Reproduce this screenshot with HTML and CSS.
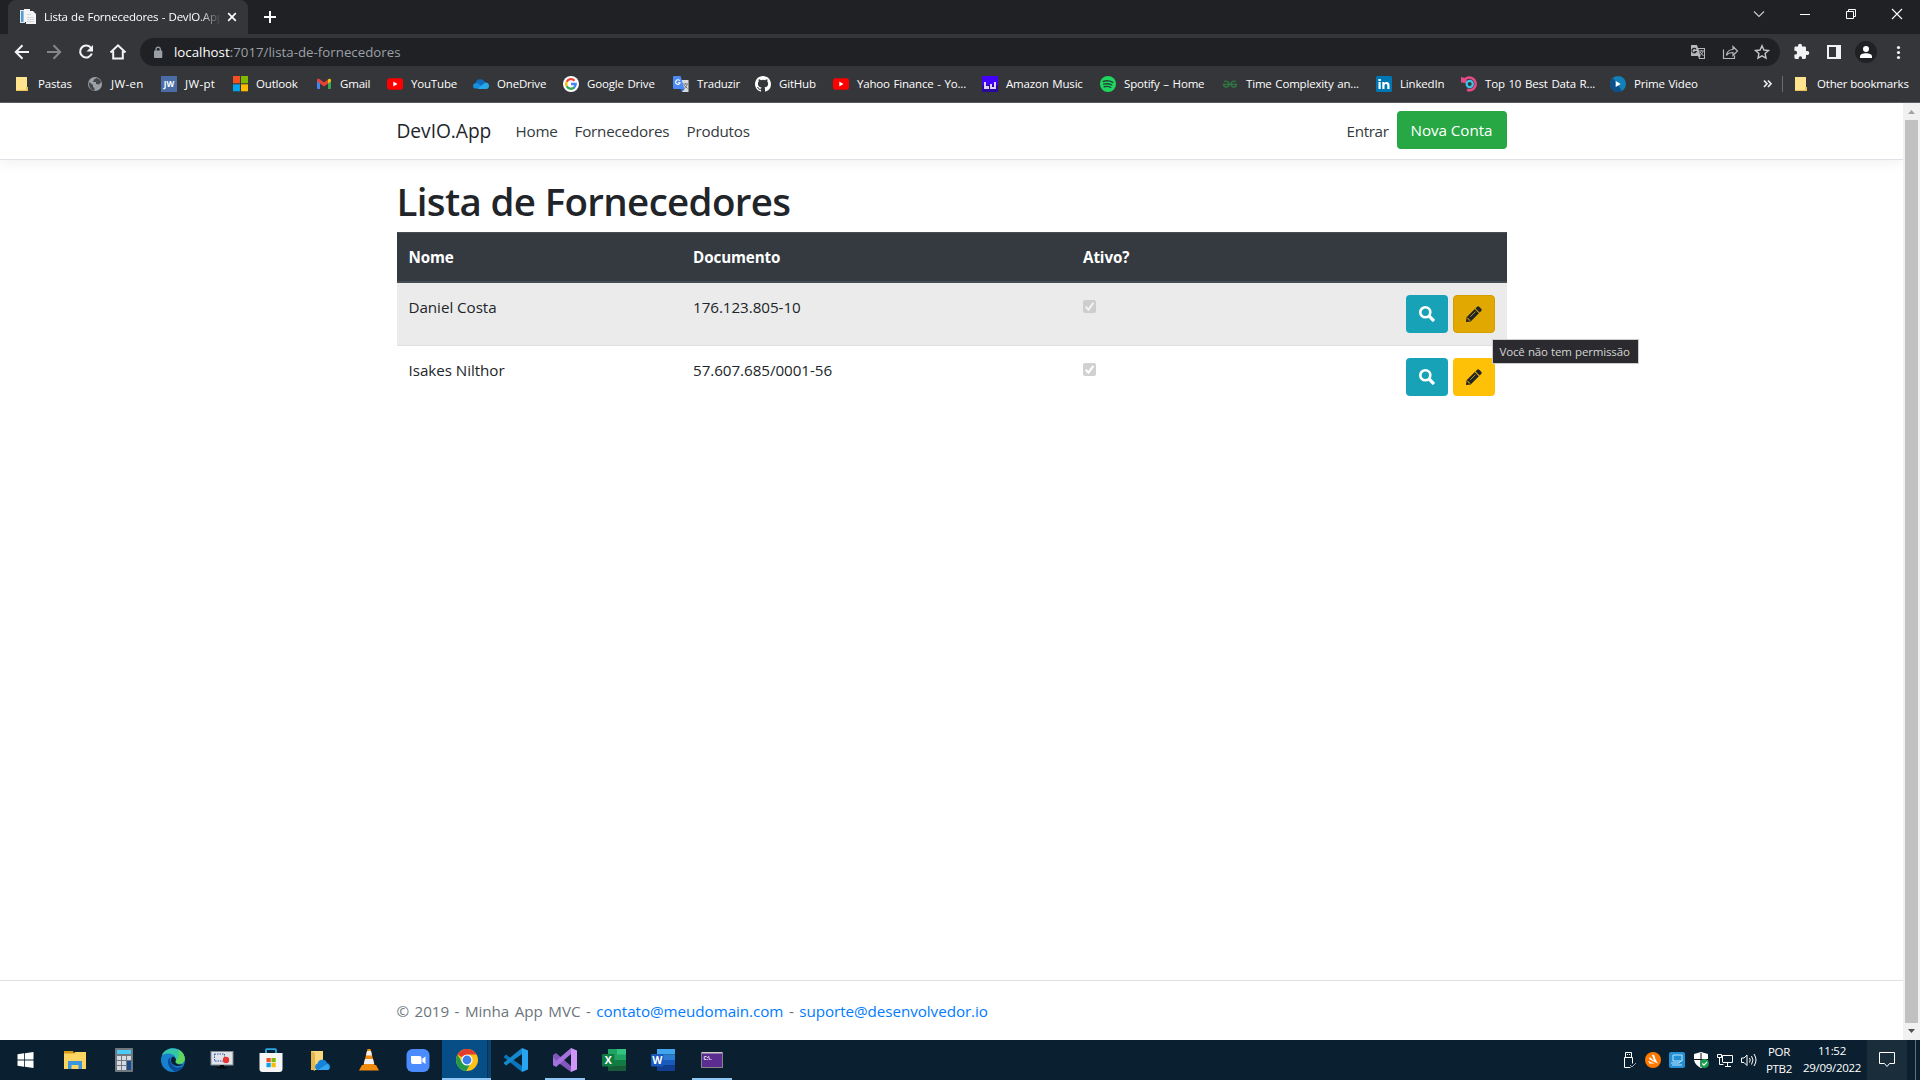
FILE: index.html
```html
<!DOCTYPE html>
<html lang="pt-br">
<head>
<meta charset="utf-8">
<title>Lista de Fornecedores - DevIO.App</title>
<link rel="stylesheet" href="styles.css">
</head>
<body>
<svg class="defs" width="0" height="0">
  <symbol id="folder" viewBox="0 0 16 16"><path fill="#ffe38f" d="M2 1h11v10h1v4H2z"/><path fill="#e9c558" d="M2 14h12v1H2zM12 11h2v4h-2z"/></symbol>
  <symbol id="youtube" viewBox="0 0 16 16"><rect y="2.3" width="16" height="11.4" rx="2.6" fill="#f00"/><path fill="#fff" d="M6.3 5.6v4.8L10.5 8z"/></symbol>
  <symbol id="search" viewBox="0 0 16 16"><circle cx="6.3" cy="6.3" r="5" fill="none" stroke="#fff" stroke-width="2.6"/><path d="M10 10l5 5" stroke="#fff" stroke-width="3.2"/></symbol>
  <symbol id="pencil" viewBox="0 0 16 16"><path fill="#212529" d="M11.1.8a1.5 1.5 0 0 1 2.1 0l2 2a1.5 1.5 0 0 1 0 2.1l-1.6 1.6-4.1-4.1zM8.8 3.1l4.1 4.1-8.2 8.2L.5 16a.5.5 0 0 1-.5-.5l.6-4.2z"/><path d="M4.3 10.8l5.2-5.2M1.2 12.2l1.2.3v1.3h1.3l.3 1" stroke="#dba40a" fill="none" stroke-width=".9"/></symbol>
</svg>

<header class="browser">
  <div class="tabstrip">
    <div class="tab">
      <svg width="16" height="16" viewBox="0 0 16 16"><path fill="#dfe6ec" d="M0 1h5v13H0z"/><path fill="#4f9fd0" d="M1 2h2.500v11H1z"/><path fill="#f4f4f4" d="M4 0h6v2h3l3 3v10H6v-2H4z"/><path fill="#d3d7da" d="M7 5h4v1H7zM7 8h7v1H7zM7 10h7v1H7zM7 12h7v1H7z"/></svg>
      <span class="tab-title">Lista de Fornecedores - DevIO.App</span>
      <svg class="tab-close" width="16" height="16" viewBox="0 0 16 16"><path d="M4.2 4.2l7.6 7.6M11.8 4.2l-7.6 7.6" stroke="#fff" stroke-width="1.7"/></svg>
    </div>
    <svg class="newtab" width="14" height="14" viewBox="0 0 14 14"><path d="M7 1v12M1 7h12" stroke="#fff" stroke-width="2"/></svg>
    <div class="winctl">
      <svg viewBox="0 0 46 28"><path d="M18 11.5l5 5 5-5" fill="none" stroke="#ccc" stroke-width="1.1"/></svg>
      <svg viewBox="0 0 46 28"><path d="M18 14.5h10" stroke="#fff"/></svg>
      <svg viewBox="0 0 46 28"><path d="M18.500 11.500h7v7h-7zM20.500 11.500v-2h7v7h-2" fill="none" stroke="#fff"/></svg>
      <svg viewBox="0 0 46 28"><path d="M18 9l10 10M28 9L18 19" stroke="#fff" stroke-width="1.1"/></svg>
    </div>
  </div>
  <div class="toolbar">
    <div class="navicons">
      <svg viewBox="0 0 32 32"><path d="M23 16H10M16.500 9.300L9.800 16l6.700 6.700" fill="none" stroke="#f1f3f4" stroke-width="2"/></svg>
      <svg viewBox="0 0 32 32"><path d="M9 16h13M15.500 9.300l6.700 6.700-6.700 6.700" fill="none" stroke="#84868a" stroke-width="2"/></svg>
      <svg viewBox="0 0 32 32"><path d="M21 12a6 6 0 1 0 .8 5.500" fill="none" stroke="#f1f3f4" stroke-width="2.100"/><path d="M23 9v6.500h-6.500z" fill="#f1f3f4"/></svg>
      <svg viewBox="0 0 32 32"><path d="M8.500 16.500L16 9.300l7.500 7.200M11.200 15v7.500h9.600V15" fill="none" stroke="#f1f3f4" stroke-width="2"/></svg>
    </div>
    <div class="omnibox">
      <svg class="lock" width="10" height="13" viewBox="0 0 10 13"><rect x="1" y="4.500" width="8.300" height="7.500" rx="1" fill="#9aa0a6"/><path d="M3 5V3.200a2.150 2.150 0 0 1 4.300 0V5" fill="none" stroke="#9aa0a6" stroke-width="1.300"/></svg>
      <span class="url"><b>localhost</b>:7017/lista-de-fornecedores</span>
      <div class="omni-icons">
        <svg viewBox="0 0 32 32"><path fill="#b5b7ba" d="M9 9h6l1 3h7v11h-6l-1-3H9z"/><path fill="#202124" d="M16.500 13H22v9h-4.500l1-2z"/><path d="M14 13.300a2.200 2.200 0 1 0 .2 2.200H12.500" fill="none" stroke="#202124" stroke-width="1.200"/><path d="M17 15h5M19.500 14v1M21 15.500c-.5 2-2 3-3.500 4M18 16l3.500 4" fill="none" stroke="#b5b7ba"/></svg>
        <svg viewBox="0 0 32 32"><path d="M9.500 13.500v9h11v-3" fill="none" stroke="#b5b7ba" stroke-width="1.200"/><path d="M12.500 19.500c.5-4 3-6 6.500-6v-3l4.500 4.500-4.500 4.500v-3c-3 0-5 .8-6.500 3z" fill="none" stroke="#b5b7ba" stroke-width="1.200"/></svg>
        <svg viewBox="0 0 32 32"><path d="M16 9.800l1.900 4.200 4.600.5-3.400 3.100.9 4.600-4-2.400-4 2.400.9-4.600-3.400-3.100 4.600-.5z" fill="none" stroke="#c4c6c9" stroke-width="1.400"/></svg>
      </div>
    </div>
    <div class="exticons">
      <svg viewBox="0 0 32 32"><path fill="#f1f3f4" d="M21.300 15H20v-3.200c0-.7-.6-1.300-1.300-1.300H16V9.800a2 2 0 0 0-4 0v.7H9.700c-.7 0-1.300.6-1.300 1.300v3h.8a1.900 1.900 0 0 1 0 3.800h-.8v3c0 .7.600 1.400 1.300 1.400h3v-1a1.700 1.700 0 0 1 3.400 0v1h2.600c.7 0 1.300-.7 1.300-1.400V19h1.300a2 2 0 0 0 0-4z"/></svg>
      <svg viewBox="0 0 32 32"><path fill="#f1f3f4" fill-rule="evenodd" d="M9 9h14v14H9zM11 11v10h7V11z"/></svg>
      <svg viewBox="0 0 32 32"><circle cx="16" cy="16" r="11" fill="#202124"/><circle cx="16" cy="13" r="3" fill="#fff"/><path d="M10 22v-1.500c0-2 3-3.200 6-3.200s6 1.200 6 3.200V22z" fill="#fff"/></svg>
      <svg viewBox="0 0 32 32"><g fill="#f1f3f4"><circle cx="16.500" cy="11.500" r="1.600"/><circle cx="16.500" cy="16.500" r="1.600"/><circle cx="16.500" cy="21.500" r="1.600"/></g></svg>
    </div>
  </div>
  <nav class="bookmarks">
    <div class="bm"><svg><use href="#folder"/></svg><span>Pastas</span></div>
    <div class="bm wide"><svg viewBox="0 0 16 16"><circle cx="8" cy="8" r="7" fill="#9aa0a6"/><path d="M2 6l4 3v2l1.500 1v2.800C4 14.500 1.500 11 2 6zM7 3.500L9.500 2c2.500.5 4 2 4.700 4L12 8.500 9 8V6H6z" fill="#45474b"/></svg><span>JW-en</span></div>
    <div class="bm wide"><svg viewBox="0 0 16 16"><rect width="16" height="16" fill="#4a6da7"/><text x="8" y="11" class="logo jw">JW</text></svg><span>JW-pt</span></div>
    <div class="bm"><svg viewBox="0 0 16 16"><path fill="#f25022" d="M1 0h7v7.300H1z"/><path fill="#7fba00" d="M9 0h7v7.300H9z"/><path fill="#00a4ef" d="M1 8.300h7v7H1z"/><path fill="#ffb900" d="M9 8.300h7v7H9z"/></svg><span>Outlook</span></div>
    <div class="bm"><svg viewBox="0 0 16 16"><path fill="#4285f4" d="M1 4l3 2.500V13H2a1 1 0 0 1-1-1z"/><path fill="#34a853" d="M12 6.500L15 4v8a1 1 0 0 1-1 1h-2z"/><path fill="#ea4335" d="M1 4.500V4a1.500 1.500 0 0 1 2.400-1L8 6.500 12 3.500v4L8 10.500 1 5z"/><path fill="#fbbc04" d="M12 3.500l.6-.5A1.500 1.500 0 0 1 15 4v1.200l-3 2.300z"/></svg><span>Gmail</span></div>
    <div class="bm"><svg><use href="#youtube"/></svg><span>YouTube</span></div>
    <div class="bm"><svg viewBox="0 0 16 16"><path fill="#0f6cbd" d="M2.500 8A5 5 0 0 1 12 6l-4 6H3z"/><path fill="#1490df" d="M0 10.300A3.300 3.300 0 0 1 5 7.400l7 5.100H3A2.500 2.500 0 0 1 0 10.300z"/><path fill="#28a8ea" d="M4.500 12.900L12 6.500a3.300 3.300 0 0 1 4 3.600 2.900 2.900 0 0 1-3 2.800z"/></svg><span>OneDrive</span></div>
    <div class="bm"><svg viewBox="0 0 16 16"><circle cx="8" cy="8" r="8" fill="#fff"/><g fill="none" stroke-width="2.300"><path stroke="#ea4335" d="M3.800 5.800A4.700 4.700 0 0 1 11.500 4.700"/><path stroke="#fbbc05" d="M3.800 5.600a4.700 4.700 0 0 0 0 4.800"/><path stroke="#34a853" d="M3.800 10.200a4.700 4.700 0 0 0 7.500 1.200"/><path stroke="#4285f4" d="M8 8h4.700a4.700 4.700 0 0 1-1.600 3.600"/></g></svg><span>Google Drive</span></div>
    <div class="bm"><svg viewBox="0 0 16 16"><path fill="#d8dadd" d="M7 4h8.500v12H9z"/><path fill="#4c8bf5" d="M1 0h6.500l4 13H1a1 1 0 0 1-1-1V1a1 1 0 0 1 1-1z"/><path fill="#3367d6" d="M8 13h3.500L9 16z"/><path d="M6.800 4.800a2.300 2.300 0 1 0 .3 2H5" fill="none" stroke="#fff" stroke-width="1.100"/><path d="M10 8h5M12.500 7v1M14 8.500c-.5 2-1.500 3-3 4M11 9l3.500 3.500" stroke="#777" fill="none"/></svg><span>Traduzir</span></div>
    <div class="bm"><svg viewBox="0 0 16 16"><path fill="#fff" d="M8 0C3.580 0 0 3.580 0 8c0 3.540 2.290 6.530 5.470 7.590.4.070.55-.17.55-.38 0-.19-.01-.82-.01-1.490-2.010.37-2.530-.49-2.690-.94-.09-.23-.48-.94-.82-1.130-.28-.15-.68-.52-.01-.53.63-.01 1.080.58 1.230.82.72 1.210 1.870.87 2.330.66.07-.52.28-.87.51-1.070-1.780-.2-3.640-.89-3.640-3.950 0-.87.31-1.590.82-2.150-.08-.2-.36-1.020.08-2.120 0 0 .67-.21 2.200.82a7.600 7.600 0 0 1 4 0c1.530-1.040 2.200-.82 2.200-.82.44 1.100.16 1.920.08 2.120.51.56.82 1.270.82 2.150 0 3.070-1.870 3.750-3.650 3.950.29.25.54.73.54 1.480 0 1.070-.01 1.930-.01 2.200 0 .21.15.46.55.38A8.010 8.010 0 0 0 16 8c0-4.420-3.580-8-8-8z"/></svg><span>GitHub</span></div>
    <div class="bm"><svg><use href="#youtube"/></svg><span>Yahoo Finance - Yo...</span></div>
    <div class="bm"><svg viewBox="0 0 16 16"><rect width="16" height="16" fill="#4200ff"/><path fill="#2b079c" d="M0 9h16v7H0z"/><path fill="#dcd2f5" d="M2 6h2v7H2zM4 10h3v3H4zM8 8h2v5H8zM8 11h4v2H8zM12 6h2v7h-2z"/></svg><span>Amazon Music</span></div>
    <div class="bm"><svg viewBox="0 0 16 16"><circle cx="8" cy="8" r="8" fill="#1ed760"/><path d="M3.300 5.500c3-1 6.800-.7 9.500.8M3.800 8.200c2.600-.8 5.500-.5 8 .8M4.200 10.700c2.200-.6 4.500-.4 6.600.8" fill="none" stroke="#26433a" stroke-width="1.400" stroke-linecap="round"/></svg><span>Spotify – Home</span></div>
    <div class="bm"><svg viewBox="0 0 16 16"><path d="M2 5.500c3-1 5 .5 5 2.500S5.500 11 4 11 1.500 10 1.500 8.300h13C14.500 10 13.500 11 12 11S9 10 9 8s2-3.500 5-2.500" fill="none" stroke="#2c7a42" stroke-width="1.300"/></svg><span>Time Complexity an...</span></div>
    <div class="bm"><svg viewBox="0 0 16 16"><rect width="16" height="16" rx="1.500" fill="#0077b5"/><path fill="#fff" d="M2.500 6h2.200v7H2.500zM2.400 3h2.400v2H2.400zM6.300 6h2.200v1c1-1.600 5-1.800 5 2v4h-2.200V9.500c0-2.300-2.800-2-2.800 0V13H6.300z"/></svg><span>LinkedIn</span></div>
    <div class="bm"><svg viewBox="0 0 16 16"><path d="M3 4.500A6.300 6.300 0 1 1 6 13.800" fill="none" stroke="#e64a87" stroke-width="2.600"/><path fill="#e64a87" d="M0 1l6 1.500L5 7l-5-.5z"/><circle cx="8.700" cy="8" r="3.100" fill="none" stroke="#3cc4e8" stroke-width="2.200"/></svg><span>Top 10 Best Data R...</span></div>
    <div class="bm"><svg viewBox="0 0 16 16"><circle cx="8" cy="8" r="8" fill="#127fb7"/><path fill="#0d4f87" d="M0 8a8 8 0 0 0 12 7L3 2A8 8 0 0 0 0 8z"/><path fill="#fff" d="M5.700 5v6l5-3z"/></svg><span>Prime Video</span></div>
    <svg class="more" viewBox="0 0 10 10"><path d="M1 1.500L4 4.800 1 8M5 1.500l3 3.300L5 8" fill="none" stroke="#e8eaed" stroke-width="1.700"/></svg>
    <div class="bm other"><svg><use href="#folder"/></svg><span>Other bookmarks</span></div>
  </nav>
</header>

<div class="viewport">
  <div class="page">
    <header class="navbar">
      <div class="container">
        <a class="brand">DevIO.App</a>
        <a class="link home">Home</a><a class="link forn">Fornecedores</a><a class="link">Produtos</a>
        <a class="link entrar">Entrar</a><a class="btn success">Nova Conta</a>
      </div>
    </header>
    <main class="container-main">
      <h1>Lista de Fornecedores</h1>
      <table>
        <thead><tr><th class="c1">Nome</th><th class="c2">Documento</th><th class="c3">Ativo?</th><th></th></tr></thead>
        <tbody>
          <tr class="odd"><td>Daniel Costa</td><td>176.123.805-10</td>
            <td><svg class="check" viewBox="0 0 13 13"><rect width="13" height="13" rx="2" fill="#cdcdcd"/><path d="M2.700 6.800l2.700 2.800 5-6.800" fill="none" stroke="#f3f3f3" stroke-width="2"/></svg></td>
            <td><div class="actions"><a class="btn info"><svg><use href="#search"/></svg></a><a class="btn warning hover"><svg><use href="#pencil"/></svg><span class="tooltip">Você não tem permissão</span></a></div></td></tr>
          <tr><td>Isakes Nilthor</td><td>57.607.685/0001-56</td>
            <td><svg class="check" viewBox="0 0 13 13"><rect width="13" height="13" rx="2" fill="#d1d1d1"/><path d="M2.700 6.800l2.700 2.800 5-6.800" fill="none" stroke="#fff" stroke-width="2"/></svg></td>
            <td><div class="actions"><a class="btn info"><svg><use href="#search"/></svg></a><a class="btn warning"><svg><use href="#pencil"/></svg></a></div></td></tr>
        </tbody>
      </table>
    </main>
    <footer class="footer"><p>© 2019 - Minha App MVC - <a>contato@meudomain.com</a> - <a>suporte@desenvolvedor.io</a></p></footer>
  </div>
  <div class="scrollbar">
    <svg viewBox="0 0 17 17"><path d="M5 11h7L8.500 7z" fill="#a3a3a3"/></svg>
    <div class="thumb"></div>
    <svg viewBox="0 0 17 17"><path d="M5 6h7l-3.500 4z" fill="#505050"/></svg>
  </div>
</div>

<footer class="taskbar">
  <div class="apps">
    <div class="app"><svg viewBox="0 0 24 24"><path fill="#fff" d="M3.500 6.200l6.500-.9v6.300H3.500zM10.800 5.200L19.500 4v7.600h-8.700zM3.500 12.400H10v6.300l-6.500-.9zM10.800 12.400h8.700V20l-8.700-1.200z"/></svg></div>
    <div class="app"><svg viewBox="0 0 24 24"><path fill="#d69b10" d="M1 3h9l1 2v3H1z"/><path fill="#fcd462" d="M1 5.500h10L12 4h11v17H1z"/><path fill="#3a96dd" d="M5 13h14v8h-3.500v-4h-7v4H5z"/></svg></div>
    <div class="app"><svg viewBox="0 0 24 24"><rect x="3" width="18" height="24" rx="1" fill="#707980"/><path fill="#4cc9f5" d="M5 2h14v4H5z"/><g fill="#d5dbe0"><path d="M5 8h4v4H5zM10 8h4v4h-4zM15 8h4v4h-4zM5 13h4v4H5zM10 13h4v4h-4zM5 18h4v4H5zM10 18h4v4h-4z"/></g><path fill="#174a8f" d="M15 13h4v9h-4z"/></svg></div>
    <div class="app"><svg viewBox="0 0 24 24"><circle cx="12" cy="12" r="12" fill="#1781cf"/><path fill="#35c6a5" d="M1 7C5-2 20-2 23.500 9c1 4-1.500 7-5 7-4 0-5-2-3.500-4C15 5 6 4 1 7z"/><path fill="#62d65a" d="M17 1.200c6 3 8 9 6 12.300-2 3-8 3-8.500 0C18 10 19 5 17 1.200z"/><path fill="#0b4c99" d="M9 9c-4 4-2 11 5 14.800 4-.5 7-3 8-5.300-6 3-13 0-13-9.500z"/><path fill="#0a1f30" d="M11 9c-2 3-1 7 3 8.500 3 1 6 .5 8.300-1C18 17 14 16 14.500 13 16 11 13 8 11 9z"/></svg></div>
    <div class="app"><svg viewBox="0 0 24 24"><rect x="1" y="3.500" width="22" height="13.500" fill="#dfe3e8" stroke="#808890"/><path d="M10 17h4v2h3v1.500H7V19h3z" fill="#05080b"/><rect x="4.500" y="6" width="10" height="7" fill="none" stroke="#3359b5" stroke-dasharray="1.500 1"/><circle cx="16" cy="12" r="3.200" fill="#e83434"/></svg></div>
    <div class="app"><svg viewBox="0 0 24 24"><path d="M7 6V2q0-.8.800-.8h8.400q.8 0 .8.800v4" fill="none" stroke="#29a8e8" stroke-width="1.800"/><path fill="#f5f5f5" d="M.5 5h23v16a3 3 0 0 1-3 3h-17a3 3 0 0 1-3-3z"/><path fill="#f25022" d="M7.500 10h4.200v4.200H7.500z"/><path fill="#7fba00" d="M12.500 10h4.200v4.200h-4.200z"/><path fill="#00a4ef" d="M7.500 15h4.200v4.200H7.500z"/><path fill="#ffb900" d="M12.500 15h4.200v4.200h-4.200z"/></svg></div>
    <div class="app"><svg viewBox="0 0 24 24"><path fill="#f9d77e" d="M3 3h12v19H3z"/><path fill="#e4b64d" d="M3 3l4 2v18l-4-2z"/><path fill="#1683d8" d="M9 22a3.500 3.500 0 0 1 .5-6.500A5 5 0 0 1 19 15a3.700 3.700 0 0 1 1 7z"/><path fill="#35a7ee" d="M10 22l9-6a3.500 3.500 0 0 1 1 6z"/></svg></div>
    <div class="app"><svg viewBox="0 0 24 24"><path fill="#f28a0c" d="M5 17h14l3 5.500H2z"/><path fill="#f28a0c" d="M10.500 1h3L18 19H6z"/><path fill="#eef0f2" d="M10 3h4l1 4.500H9zM8 11h8l1.200 5H6.800z"/></svg></div>
    <div class="app"><svg viewBox="0 0 24 24"><rect x=".5" y="1" width="23" height="23" rx="6" fill="#4a8cff"/><path fill="#fff" d="M5 8h8.500a2 2 0 0 1 2 2v6H7a2 2 0 0 1-2-2zM16.300 10.800L19.500 8.500v7.500l-3.200-2.300z"/></svg></div>
    <div class="app active"><svg viewBox="0 0 24 24"><circle cx="12" cy="12" r="11" fill="#fbc116"/><path fill="#e33b2e" d="M12 12L2.500 6.500A11 11 0 0 1 21.500 6.500H12z"/><path fill="#229a4b" d="M2.500 6.500a11 11 0 0 0 8.700 16.500L16 14.500H12L7.300 15z"/><circle cx="12" cy="12" r="5.600" fill="#fff"/><circle cx="12" cy="12" r="4.400" fill="#3b7de9"/></svg></div>
    <div class="app"><svg viewBox="0 0 24 24"><path fill="#0a75ba" d="M0 8.500l2-2 16 11.500V24L0 9.500z"/><path fill="#1588ce" d="M0 15.500l2 2L18 6V0L0 14.500z"/><path fill="#27a5f2" d="M18 0l6 2.500v19L18 24z"/></svg></div>
    <div class="app open"><svg viewBox="0 0 24 24"><path fill="#8357b9" d="M0 7l3-2 15 13v6L3 13v5l-3-1z"/><path fill="#a571dc" d="M0 17l3 2L18 6V0L3 13 0 9z"/><path fill="#cf95f7" d="M18 0l6 2.500v19L18 24z"/></svg></div>
    <div class="app"><svg viewBox="0 0 24 24"><path fill="#21a366" d="M6 1h18v22H6z"/><path fill="#33c481" d="M15 1h9v5.500h-9z"/><path fill="#107c41" d="M6 12h9v5.500H6zM15 12h9v5.500h-9z"/><path fill="#185c37" d="M6 17.500h18V23H6z"/><rect y="6" width="12.500" height="12.500" rx="1" fill="#107c41"/><text x="6.300" y="16" class="logo off">X</text></svg></div>
    <div class="app"><svg viewBox="0 0 24 24"><path fill="#41a5ee" d="M6 1h18v5.500H6z"/><path fill="#2b7cd3" d="M6 6.500h18V12H6z"/><path fill="#185abd" d="M6 12h18v5.500H6z"/><path fill="#103f91" d="M6 17.500h18V23H6z"/><rect y="6" width="12.500" height="12.500" rx="1" fill="#185abd"/><text x="6.300" y="16" class="logo off">W</text></svg></div>
    <div class="app open"><svg viewBox="0 0 24 24"><rect x="1.500" y="4.500" width="21" height="15" fill="#5c2d91" stroke="#858585"/><path fill="#ccc" d="M2 4h20v1.500H2z"/><text x="3.500" y="11.500" class="logo cmd">C:\.</text></svg></div>
  </div>
  <div class="tray">
    <svg viewBox="0 0 16 16"><path d="M4.500 5V.5h6V5M3.500 5.500h8v6M3.500 5.500v10h6" fill="none" stroke="#fff"/><path d="M6 2h1v1H6zM8 2h1v1H8z" fill="#fff"/><path d="M9 13l2 2 4-4" fill="none" stroke="#9aa5ad"/></svg>
    <svg viewBox="0 0 16 16"><circle cx="8" cy="8" r="8" fill="#ff7800"/><path d="M7 3c2-1 3 1 3 3l3 6-4-3zM5 5l6 6-7-4zM3 9l7 2.500H4.500z" fill="#fff"/></svg>
    <svg viewBox="0 0 16 16"><rect width="16" height="16" rx="2" fill="#228fd2"/><path d="M4 3h9v6H4zM2 11h8l2-2M3 13h10" fill="none" stroke="#bfe4fa"/></svg>
    <svg viewBox="0 0 16 16"><path d="M8 0l7 2v5c0 4-3 7-7 9-4-2-7-5-7-9V2z" fill="#fff"/><path d="M8 1v14M1 7.500h14" stroke="#111"/><circle cx="11.500" cy="11.500" r="4.500" fill="#1a9c50"/><path d="M9.300 11.500l1.700 1.700 3-3.200" fill="none" stroke="#fff" stroke-width="1.200"/></svg>
    <svg viewBox="0 0 16 16"><path d="M5.500 3.500h10v7h-10zM8 14.500h6M10.500 11v3" fill="none" stroke="#fff"/><path d="M.5 2.500h4v3h-4zM2.500 5.500v7h4" fill="#0b2030" stroke="#fff"/></svg>
    <svg viewBox="0 0 16 16"><path d="M.5 6H3l3-3v10.500L3 10.500H.5zM8.500 6q1.500 2 0 4.500M10.500 4q3 4 0 8.500M13 2q4 6 0 12" fill="none" stroke="#fff"/></svg>
  </div>
  <div class="lang">POR<br>PTB2</div>
  <div class="clock">11:52<br>29/09/2022</div>
  <div class="notif"><svg width="16" height="16" viewBox="0 0 16 16"><path d="M.5.500h15v11h-5L8 14.500l-2.500-3h-5z" fill="none" stroke="#fff"/></svg></div>
  <div class="peek"></div>
</footer>
</body>
</html>
```

FILE: styles.css
```css
* { box-sizing: border-box; }
body {
  margin: 0; width: 1920px; height: 1080px; overflow: hidden;
  display: flex; flex-direction: column;
  font-family: "Open Sans", "Noto Sans", sans-serif; background: #fff; color: #212529;
}
svg { display: block; flex: none; }
.defs { position: absolute; }

/* browser chrome */
.browser { height: 103px; background: #35363a; border-bottom: 1px solid #5c5d61; color: #fff; font-size: 11.5px; }
.tabstrip { height: 34px; background: #202124; display: flex; padding-left: 8px; }
.tab { width: 240px; height: 34px; background: #35363a; border-radius: 8px 8px 0 0; display: flex; align-items: center; padding: 0 8px 0 12px; }
.tab-title { margin-left: 8px; padding-bottom: 2px; width: 177px; white-space: nowrap; overflow: hidden; letter-spacing: -.23px; word-spacing: .6px; -webkit-mask-image: linear-gradient(90deg, #000 155px, transparent 177px); }
.tab-close { margin-left: 3px; }
.newtab { margin: 10px 0 0 15px; }
.winctl { margin-left: auto; display: flex; }
.winctl svg { width: 46px; height: 28px; }
.toolbar { height: 36px; display: flex; align-items: center; padding: 0 6px; }
.navicons, .exticons, .omni-icons { display: flex; }
.navicons svg, .exticons svg, .omni-icons svg { width: 32px; height: 32px; }
.omnibox { margin-left: 6px; width: 1640px; height: 28px; border-radius: 14px; background: #202124; display: flex; align-items: center; padding: 0 2px 0 13px; }
.url { margin-left: 11px; font-size: 13.3px; color: #9aa0a6; }
.url b { font-weight: 400; color: #fff; }
.omni-icons { margin-left: auto; }
.exticons { margin-left: 6px; }
.bookmarks {
  height: 28px; display: grid; align-items: center; padding-left: 14px; white-space: nowrap; letter-spacing: -.18px; word-spacing: .9px;
  grid-template-columns: 73px 74px 71px 84px 71px 86px 90px 110px 82px 78px 149px 118px 122px 154px 85px 149px 153px 19px 138px;
}
.bm { display: flex; align-items: center; gap: 8px; }
.bm svg { width: 16px; height: 16px; }
.bm span { padding-bottom: 2px; }
.wide { letter-spacing: .35px; }
.more { width: 10px; height: 10px; }
.other { border-left: 1px solid #6b6d71; height: 16px; padding-left: 10px; word-spacing: 0; }
.logo { fill: #fff; font-weight: 700; text-anchor: middle; letter-spacing: 0; }
.jw { font-size: 8px; }
.off { font-size: 10.500px; }
.cmd { font-size: 5px; text-anchor: start; }

/* page */
.viewport { height: 937px; display: flex; }
.page { width: 1903px; display: flex; flex-direction: column; font-size: 15.2px; line-height: 24px; letter-spacing: -.05px; }
.navbar { height: 57px; border-bottom: 1px solid #dee2e6; box-shadow: 0 4px 12px rgba(0,0,0,.05); padding: 8px 0; }
.container { width: 1110px; margin: 0 auto; display: flex; align-items: flex-start; }
.brand { font-size: 19.200px; line-height: 30px; margin-top: 5px; width: 111px; }
.link { color: #343a40; padding: 8px; letter-spacing: -.2px; }
.home { width: 59px; }
.forn { width: 112px; }
.entrar { margin-left: auto; letter-spacing: -.35px; }
.btn { height: 38px; border-radius: 4px; display: flex; align-items: center; justify-content: center; }
.success { width: 110px; background: #28a745; color: #fff; }
.container-main { width: 1110px; margin: 16px auto 0; flex: 1; }
h1 { font-size: 38.500px; font-weight: 600; line-height: 50px; margin: 0 0 6px; letter-spacing: -.66px; }
table { width: 1110px; table-layout: fixed; border-collapse: separate; border-spacing: 0; }
th, td { padding: 12px; text-align: left; vertical-align: top; }
thead th { background: #343a40; color: #fff; border-top: 1px solid #454d55; border-bottom: 2px solid #454d55; height: 51px; letter-spacing: -.1px; }
.c1 { width: 284.5px; }
.c2 { width: 390px; }
.c3 { width: 243px; }
.odd td { background: #ebebeb; border-bottom: 1px solid #dee2e6; }
.check { width: 13px; height: 13px; margin-top: 5px; }
.actions { display: flex; justify-content: flex-end; gap: 5px; height: 38px; }
.actions .btn { width: 42px; position: relative; }
.actions svg { width: 16px; height: 16px; }
.info { background: #17a2b8; }
.warning { background: #ffc107; }
.hover { background: #e0a800; border: 1px solid #d39e00; }
.tooltip {
  position: absolute; left: 38px; top: 43px; z-index: 2; width: 147px; height: 25px;
  border: 1px solid #ccc; background: #2b2b2f; color: #d5d5d5; font-size: 11.500px; line-height: 23px;
  padding-left: 7px; white-space: nowrap; letter-spacing: -.15px; word-spacing: .4px;
}
.footer { height: 60px; border-top: 1px solid #dee2e6; color: #6c757d; line-height: 60px; word-spacing: 1.6px; }
.footer p { width: 1110px; margin: 0 auto; }
.footer a { color: #007bff; }
.scrollbar { width: 17px; background: #f1f1f1; display: flex; flex-direction: column; }
.scrollbar svg { width: 17px; height: 17px; }
.thumb { flex: 1; background: #c1c1c1; margin: 0 2px; }

/* taskbar */
.taskbar { height: 40px; background: #0a2030; display: flex; align-items: center; color: #fff; font-size: 11.500px; line-height: 17px; text-align: center; }
.apps { display: flex; height: 40px; padding-left: 1px; }
.app { width: 49px; height: 40px; display: flex; align-items: center; justify-content: center; }
.app svg { width: 24px; height: 24px; }
.active { background: linear-gradient(90deg, #064e85 45px, #07325a 45px, #07325a 46px, #0a436f 46px); border-bottom: 2px solid #90c6f5; padding-top: 2px; }
.open { background: linear-gradient(#90c6f5, #90c6f5) center bottom / 40px 2px no-repeat; }
.tray { margin-left: auto; display: flex; gap: 8px; }
.tray svg { width: 16px; height: 16px; }
.lang { width: 28px; margin-left: 8px; letter-spacing: -.3px; padding-bottom: 1px; }
.clock { width: 62px; margin-left: 8px; letter-spacing: -.3px; padding-bottom: 3px; }
.notif { width: 40px; height: 40px; margin-left: 4px; background: #1a2d3b; display: flex; align-items: center; justify-content: center; }
.peek { width: 13px; height: 40px; background: linear-gradient(90deg, transparent 8px, #61707a 8px, #61707a 9px, transparent 9px); }
```
